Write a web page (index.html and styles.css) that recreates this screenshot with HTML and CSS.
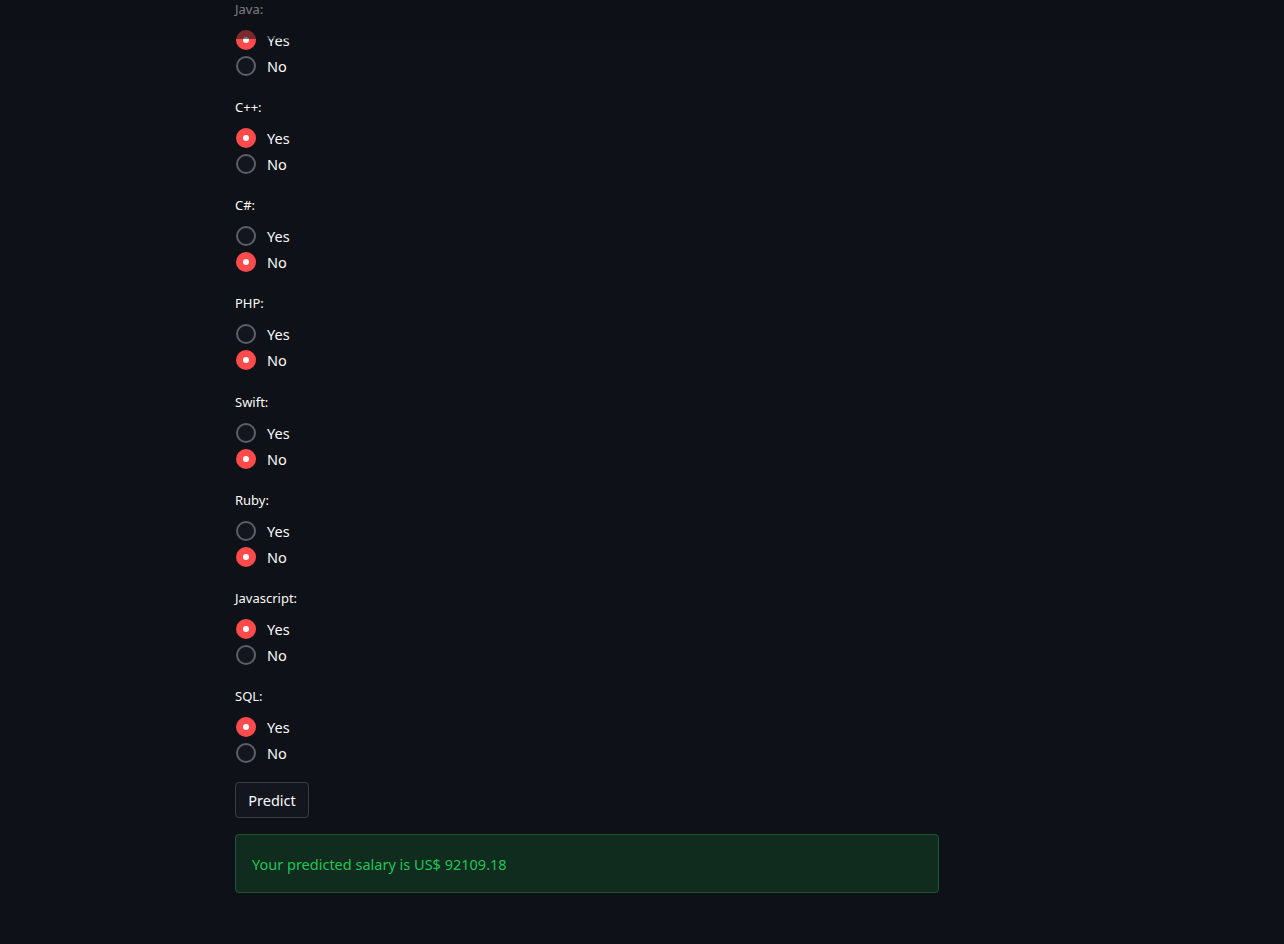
FILE: index.html
```html
<!DOCTYPE html>
<html>
<head>
<meta charset="utf-8">
<link rel="stylesheet" href="styles.css">
</head>
<body>
<div class="header"></div>
<main class="block">
  <div class="group first">
    <div class="label">Java:</div>
    <div class="option"><span class="radio on"></span><span class="opt-text">Yes</span></div>
    <div class="option"><span class="radio"></span><span class="opt-text">No</span></div>
  </div>
  <div class="group">
    <div class="label">C++:</div>
    <div class="option"><span class="radio on"></span><span class="opt-text">Yes</span></div>
    <div class="option"><span class="radio"></span><span class="opt-text">No</span></div>
  </div>
  <div class="group">
    <div class="label">C#:</div>
    <div class="option"><span class="radio"></span><span class="opt-text">Yes</span></div>
    <div class="option"><span class="radio on"></span><span class="opt-text">No</span></div>
  </div>
  <div class="group">
    <div class="label">PHP:</div>
    <div class="option"><span class="radio"></span><span class="opt-text">Yes</span></div>
    <div class="option"><span class="radio on"></span><span class="opt-text">No</span></div>
  </div>
  <div class="group">
    <div class="label">Swift:</div>
    <div class="option"><span class="radio"></span><span class="opt-text">Yes</span></div>
    <div class="option"><span class="radio on"></span><span class="opt-text">No</span></div>
  </div>
  <div class="group">
    <div class="label">Ruby:</div>
    <div class="option"><span class="radio"></span><span class="opt-text">Yes</span></div>
    <div class="option"><span class="radio on"></span><span class="opt-text">No</span></div>
  </div>
  <div class="group">
    <div class="label">Javascript:</div>
    <div class="option"><span class="radio on"></span><span class="opt-text">Yes</span></div>
    <div class="option"><span class="radio"></span><span class="opt-text">No</span></div>
  </div>
  <div class="group last">
    <div class="label">SQL:</div>
    <div class="option"><span class="radio on"></span><span class="opt-text">Yes</span></div>
    <div class="option"><span class="radio"></span><span class="opt-text">No</span></div>
  </div>
  <button class="btn">Predict</button>
  <div class="success">Your predicted salary is US$ 92109.18</div>
</main>
</body>
</html>
```

FILE: styles.css
```css
html, body {
  margin: 0;
  padding: 0;
  background: #0e1117;
  color: #fafafa;
  font-family: "Noto Sans", "Liberation Sans", sans-serif;
}
.header {
  position: fixed;
  top: 0;
  left: 0;
  right: 0;
  height: 39px;
  background: rgba(14, 17, 23, 0.55);
  z-index: 10;
}
.block {
  width: 704px;
  margin-left: 235px;
  display: flex;
  flex-direction: column;
  align-items: flex-start;
}
.group {
  width: 100%;
  padding-bottom: 18.17px;
}
.group.first {
  margin-top: -1px;
}
.group.last {
  padding-bottom: 16px;
}
.label {
  height: 20px;
  line-height: 20px;
  font-size: 13px;
  margin-bottom: 8px;
  color: #fafafa;
}
.option {
  height: 26px;
  display: flex;
  align-items: center;
}
.radio {
  box-sizing: border-box;
  width: 20px;
  height: 20px;
  border-radius: 50%;
  border: 2px solid #5c5f68;
  background: #13161d;
  margin-left: 1px;
  margin-right: 11px;
  display: flex;
  align-items: center;
  justify-content: center;
}
.radio.on {
  border: none;
  background: #ff4b4b;
}
.radio.on::after {
  content: "";
  width: 6px;
  height: 6px;
  border-radius: 50%;
  background: #fff;
}
.opt-text {
  font-size: 14.5px;
  line-height: 20px;
}
.btn {
  box-sizing: border-box;
  height: 36px;
  width: 74px;
  padding: 0;
  font-family: inherit;
  font-size: 14.5px;
  color: #fafafa;
  background: #13161f;
  border: 1px solid #393c45;
  border-radius: 4px;
  margin-bottom: 16px;
}
.success {
  box-sizing: border-box;
  width: 704px;
  height: 59px;
  padding: 0 16px;
  display: flex;
  align-items: center;
  font-size: 14.5px;
  color: #21c354;
  background: #0f2c1f;
  border: 1px solid #1a5a2e;
  border-radius: 4px;
}
```
